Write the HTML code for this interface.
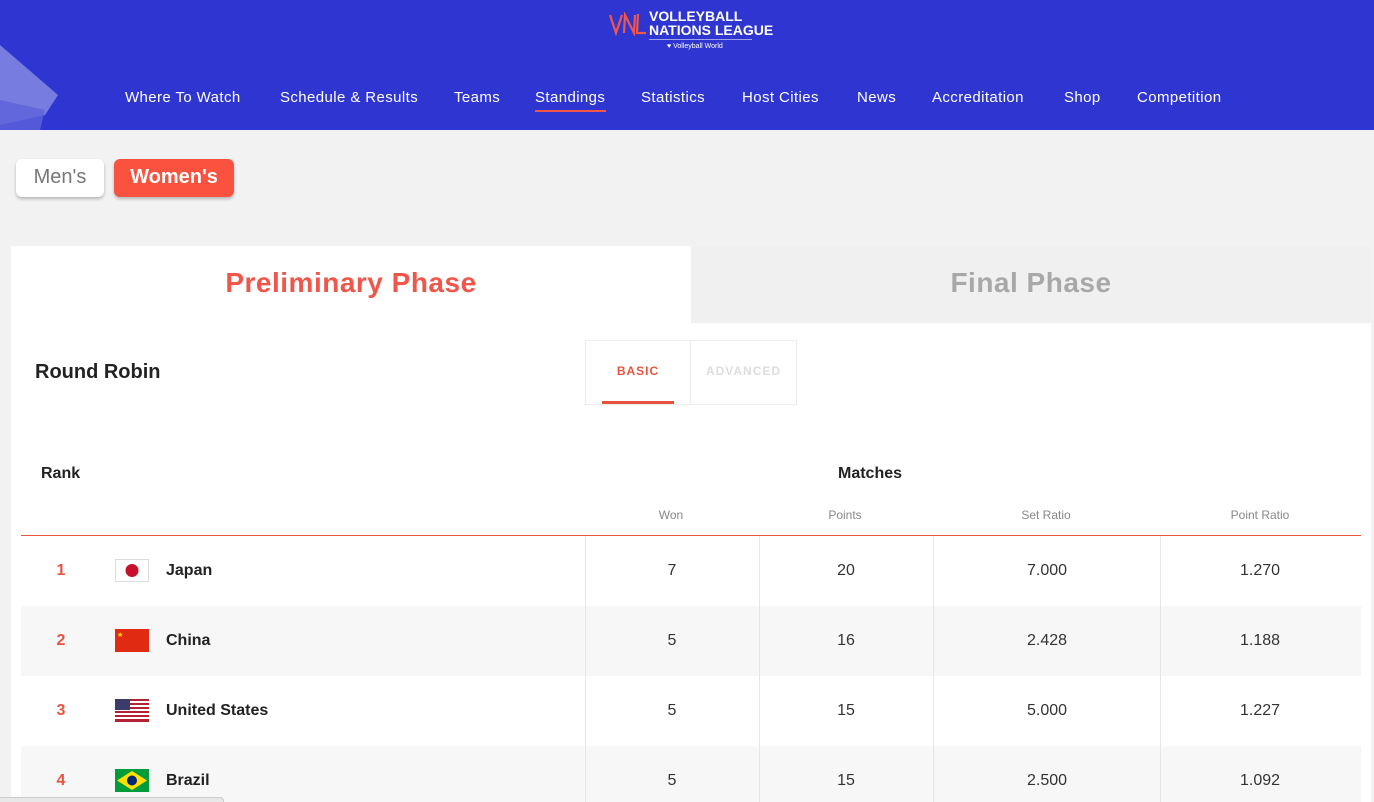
<!DOCTYPE html>
<html><head><meta charset="utf-8"><style>
*{margin:0;padding:0;box-sizing:border-box}
html,body{width:1374px;height:802px;overflow:hidden}
body{background:#f2f2f2;font-family:"Liberation Sans",sans-serif;position:relative}
.hdr{position:absolute;left:0;top:0;width:1374px;height:130px;background:#2f35d0;overflow:hidden}
.nav{position:absolute;top:89px;font-size:15px;color:#fff;letter-spacing:.4px;white-space:nowrap}
.abs{position:absolute}
.btn{position:absolute;top:159px;height:38px;border-radius:6px;font-size:20px;font-weight:bold;text-align:center;line-height:36px;box-shadow:0 2px 3px rgba(0,0,0,.25)}
.card{position:absolute;left:11px;top:246px;width:1360px;height:556px;background:#fff}
.row{position:absolute;left:21px;width:1340px;height:70px}
.c{position:absolute;font-size:16px;color:#333;text-align:center;width:100px}
.rk{position:absolute;left:56px;width:10px;text-align:center;color:#e8533f;font-size:16px;font-weight:bold}
.nm{position:absolute;left:166px;font-size:16px;font-weight:bold;color:#222}
.fl{position:absolute;left:115px;width:34px;height:23px}
.vl{position:absolute;top:536px;width:1px;height:266px;background:#e6e6e6}
.sh{position:absolute;top:508px;font-size:12px;color:#888;width:120px;text-align:center}
</style></head><body>
<div class="hdr">
<svg class="abs" style="left:0;top:0" width="80" height="130"><polygon points="0,45 58,95 45,115 0,125" fill="#8a8fe3" opacity=".8"/><polygon points="0,100 45,110 40,130 0,130" fill="#5d63da" opacity=".8"/></svg>
<svg class="abs" style="left:609px;top:12px" width="38" height="24" viewBox="0 0 38 24"><path d="M1 3 L7 21 L13 3 M15 21 L16 3 L25 21 L26 3 M29 2 L28 21 L37 21" fill="none" stroke="#f0564a" stroke-width="2.2"/></svg>
<div class="abs" style="left:649px;top:9px;color:#fff;font-size:14px;font-weight:bold;line-height:14px">VOLLEYBALL<br>NATIONS LEAGUE</div>
<div class="abs" style="left:649px;top:39px;width:103px;height:1px;background:#9fa3ea"></div>
<div class="abs" style="left:667px;top:43px;color:#fff;font-size:7px">♥ Volleyball World</div>
<div class="nav" style="left:125px">Where To Watch</div>
<div class="nav" style="left:280px">Schedule &amp; Results</div>
<div class="nav" style="left:454px">Teams</div>
<div class="nav" style="left:535px">Standings</div>
<div class="abs" style="left:535px;top:110px;width:71px;height:2px;background:#f0564a"></div>
<div class="nav" style="left:641px">Statistics</div>
<div class="nav" style="left:742px">Host Cities</div>
<div class="nav" style="left:857px">News</div>
<div class="nav" style="left:932px">Accreditation</div>
<div class="nav" style="left:1064px">Shop</div>
<div class="nav" style="left:1137px">Competition</div>
</div>
<div class="btn" style="left:16px;width:88px;background:#fff;color:#777;font-weight:normal">Men's</div>
<div class="btn" style="left:114px;width:120px;background:#f9533f;color:#fff">Women's</div>
<div class="card"></div>
<div class="abs" style="left:691px;top:246px;width:680px;height:77px;background:#f0f0f0"></div>
<div class="abs" style="left:11px;top:267px;width:680px;text-align:center;color:#f0564a;font-size:28px;font-weight:bold;letter-spacing:.5px">Preliminary Phase</div>
<div class="abs" style="left:691px;top:267px;width:680px;text-align:center;color:#a8a8a8;font-size:28px;font-weight:bold;letter-spacing:.5px">Final Phase</div>
<div class="abs" style="left:35px;top:361px;font-size:20px;font-weight:bold;color:#222">Round Robin</div>
<div class="abs" style="left:585px;top:340px;width:212px;height:65px;border:1px solid #ececec"></div>
<div class="abs" style="left:690px;top:340px;width:1px;height:65px;background:#ececec"></div>
<div class="abs" style="left:586px;top:364px;width:104px;text-align:center;font-size:12px;font-weight:bold;color:#e8533f;letter-spacing:1px">BASIC</div>
<div class="abs" style="left:691px;top:364px;width:105px;text-align:center;font-size:12px;font-weight:bold;color:#ddd;letter-spacing:1px">ADVANCED</div>
<div class="abs" style="left:602px;top:401px;width:72px;height:3px;background:#e8533f"></div>
<div class="abs" style="left:41px;top:465px;font-size:16px;font-weight:bold;color:#222">Rank</div>
<div class="abs" style="left:838px;top:465px;font-size:16px;font-weight:bold;color:#222">Matches</div>
<div class="sh" style="left:611px">Won</div>
<div class="sh" style="left:785px">Points</div>
<div class="sh" style="left:986px">Set Ratio</div>
<div class="sh" style="left:1200px">Point Ratio</div>
<div class="abs" style="left:21px;top:535px;width:1340px;height:1px;background:#e8533f"></div>
<div class="row" style="top:536px;background:#fff"></div>
<div class="row" style="top:606px;background:#f7f7f7"></div>
<div class="row" style="top:676px;background:#fff"></div>
<div class="row" style="top:746px;background:#f7f7f7"></div>
<div class="vl" style="left:585px"></div><div class="vl" style="left:759px"></div><div class="vl" style="left:933px"></div><div class="vl" style="left:1160px"></div>

<div class="rk" style="top:562px">1</div>
<svg class="fl" style="top:559px" viewBox="0 0 34 23"><rect x=".5" y=".5" width="33" height="22" fill="#fff" stroke="#ddd"/><circle cx="17" cy="11.5" r="6.5" fill="#c8102e"/></svg>
<div class="nm" style="top:562px">Japan</div>
<div class="c" style="left:622px;top:562px">7</div><div class="c" style="left:796px;top:562px">20</div><div class="c" style="left:997px;top:562px">7.000</div><div class="c" style="left:1210px;top:562px">1.270</div>

<div class="rk" style="top:632px">2</div>
<svg class="fl" style="top:629px" viewBox="0 0 34 23"><rect width="34" height="23" fill="#e02a12"/><text x="2" y="8" font-size="7" fill="#ffde00">★</text></svg>
<div class="nm" style="top:632px">China</div>
<div class="c" style="left:622px;top:632px">5</div><div class="c" style="left:796px;top:632px">16</div><div class="c" style="left:997px;top:632px">2.428</div><div class="c" style="left:1210px;top:632px">1.188</div>

<div class="rk" style="top:702px">3</div>
<svg class="fl" style="top:699px" viewBox="0 0 34 23"><rect width="34" height="23" fill="#fff"/><g fill="#b22234"><rect y="0" width="34" height="2"/><rect y="4" width="34" height="2"/><rect y="8" width="34" height="2"/><rect y="12" width="34" height="2"/><rect y="16" width="34" height="2"/><rect y="20" width="34" height="3"/></g><rect width="15" height="11" fill="#3c3b6e"/></svg>
<div class="nm" style="top:702px">United States</div>
<div class="c" style="left:622px;top:702px">5</div><div class="c" style="left:796px;top:702px">15</div><div class="c" style="left:997px;top:702px">5.000</div><div class="c" style="left:1210px;top:702px">1.227</div>

<div class="rk" style="top:772px">4</div>
<svg class="fl" style="top:769px" viewBox="0 0 34 23"><rect width="34" height="23" fill="#009b3a"/><polygon points="17,2 32,11.5 17,21 2,11.5" fill="#fedf00"/><circle cx="17" cy="11.5" r="5" fill="#002776"/></svg>
<div class="nm" style="top:772px">Brazil</div>
<div class="c" style="left:622px;top:772px">5</div><div class="c" style="left:796px;top:772px">15</div><div class="c" style="left:997px;top:772px">2.500</div><div class="c" style="left:1210px;top:772px">1.092</div>
<div class="abs" style="left:0;top:797px;width:224px;height:5px;background:#e8e8e8;border-top:1px solid #ccc;border-right:1px solid #ccc;border-radius:0 4px 0 0"></div>
</body></html>
